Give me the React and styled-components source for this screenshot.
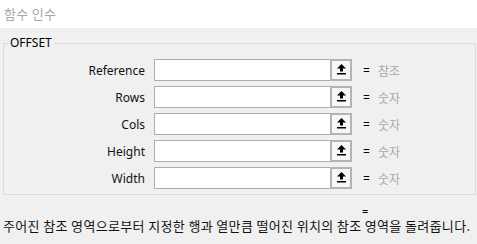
import React from "react";
import styled, { createGlobalStyle } from "styled-components";

const Global = createGlobalStyle`
  html, body { margin: 0; padding: 0; background: #f0f0f0; }
  body { font-family: "Noto Sans", "Noto Sans CJK KR", sans-serif; font-size: 12px; color: #000; }
  * { box-sizing: border-box; }
`;

const Page = styled.div`
  width: 477px;
  height: 244px;
  overflow: hidden;
  display: flex;
  flex-direction: column;
`;

const TitleBar = styled.div`
  height: 28px;
  background: #fff;
  display: flex;
  align-items: center;
  padding: 0 0 2px 4px;
  color: #a8a8a8;
  font-family: "Noto Sans CJK KR", sans-serif;
  font-size: 13px;
  letter-spacing: 0.3px;
`;

const Group = styled.div`
  position: relative;
  margin: 15px 1px 0 3px;
  border: 1px solid #dcdcdc;
  padding: 15px 0 5px 0;
  display: flex;
  flex-direction: column;
  gap: 5px;
`;

const Legend = styled.span`
  position: absolute;
  left: 4px;
  top: -9px;
  padding: 0 2px;
  background: #f0f0f0;
  font-family: "Noto Sans", sans-serif;
  font-size: 12px;
  line-height: 16px;
`;

const Row = styled.div`
  display: flex;
  align-items: center;
  height: 22px;
`;

const Label = styled.div`
  width: 141px;
  margin-right: 9px;
  text-align: right;
  font-family: "Noto Sans", sans-serif;
  font-size: 12px;
  color: #111;
`;

const Input = styled.div`
  width: 176px;
  height: 22px;
  background: #fff;
  border: 1px solid #adadad;
  border-right: none;
`;

const PickButton = styled.div`
  width: 22px;
  height: 22px;
  border: 2px solid #b4b4b4;
  background: #f7f7f7;
  display: flex;
  justify-content: center;
  padding-top: 3px;
`;

const Eq = styled.span`
  margin-left: 11px;
  width: 15px;
  font-family: "Noto Sans", sans-serif;
  font-size: 12px;
`;

const Kind = styled.span`
  color: #a8a8a8;
  font-family: "Noto Sans CJK KR", sans-serif;
  font-size: 12px;
`;

const ResultLine = styled.div`
  height: 14px;
  margin-top: 9px;
  padding-left: 362px;
  font-family: "Noto Sans", sans-serif;
  font-size: 11px;
  line-height: 14px;
`;

const Description = styled.div`
  padding-left: 3px;
  font-family: "Noto Sans CJK KR", sans-serif;
  font-size: 13px;
  letter-spacing: 0.35px;
  line-height: 16px;
  color: #111;
  white-space: nowrap;
`;

const UpArrow = () => (
  <svg width="9" height="11" viewBox="0 0 9 11">
    <polygon points="4.5,0 0,4.5 9,4.5" fill="#000" />
    <rect x="3" y="4" width="3" height="3.5" fill="#000" />
    <rect x="0" y="9" width="9" height="1.5" fill="#000" />
  </svg>
);

const args = [
  ["Reference", "참조"],
  ["Rows", "숫자"],
  ["Cols", "숫자"],
  ["Height", "숫자"],
  ["Width", "숫자"],
];

export default function App() {
  return (
    <>
      <Global />
      <Page>
        <TitleBar>함수 인수</TitleBar>
        <Group>
          <Legend>OFFSET</Legend>
          {args.map(([name, kind]) => (
            <Row key={name}>
              <Label>{name}</Label>
              <Input />
              <PickButton>
                <UpArrow />
              </PickButton>
              <Eq>=</Eq>
              <Kind>{kind}</Kind>
            </Row>
          ))}
        </Group>
        <ResultLine>=</ResultLine>
        <Description>
          주어진 참조 영역으로부터 지정한 행과 열만큼 떨어진 위치의 참조 영역을 돌려줍니다.
        </Description>
      </Page>
    </>
  );
}
